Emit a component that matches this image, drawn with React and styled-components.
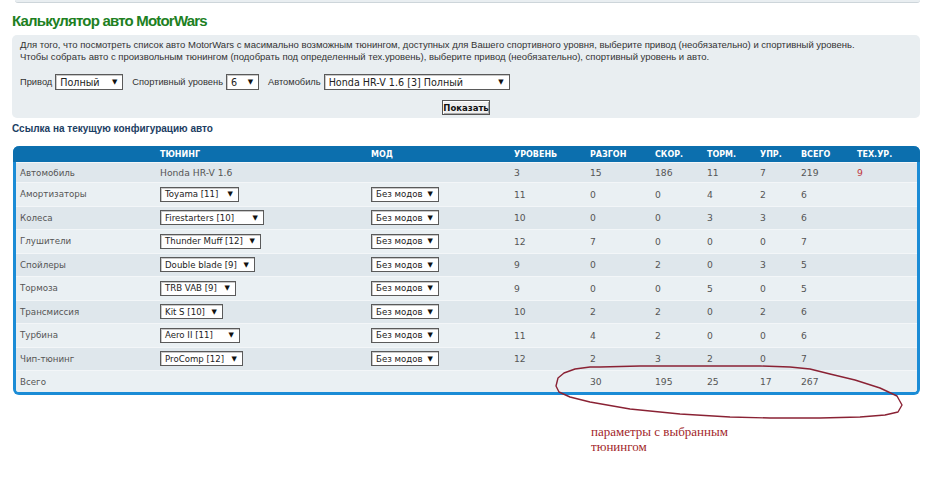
import React from "react";
import styled, { createGlobalStyle } from "styled-components";

const GlobalStyle = createGlobalStyle`
  html, body {
    margin: 0;
    padding: 0;
    background: #fff;
  }
  body {
    font-family: "DejaVu Sans", Verdana, sans-serif;
  }
`;

const rows = [
  { name: "Амортизаторы", tune: "Toyama [11]", w: 79, vals: [11, 0, 0, 4, 2, 6] },
  { name: "Колеса", tune: "Firestarters [10]", w: 104, vals: [10, 0, 0, 3, 3, 6] },
  { name: "Глушители", tune: "Thunder Muff [12]", w: 101, vals: [12, 7, 0, 0, 0, 7] },
  { name: "Спойлеры", tune: "Double blade [9]", w: 95, vals: [9, 0, 2, 0, 3, 5] },
  { name: "Тормоза", tune: "TRB VAB [9]", w: 76, vals: [9, 0, 0, 5, 0, 5] },
  { name: "Трансмиссия", tune: "Kit S [10]", w: 63, vals: [10, 2, 2, 0, 2, 6] },
  { name: "Турбина", tune: "Aero II [11]", w: 80, vals: [11, 4, 2, 0, 0, 6] },
  { name: "Чип-тюнинг", tune: "ProComp [12]", w: 83, vals: [12, 2, 3, 2, 0, 7] },
];

const heads = ["", "Тюнинг", "Мод", "Уровень", "Разгон", "Скор.", "Торм.", "Упр.", "Всего", "Тех.ур."];

// freehand loop around the totals row
const loop =
  "600,367 640,366 700,366 760,366 790,367 810,369 830,374 855,380 880,388 897,396 902,405 " +
  "898,412 885,415 860,417 820,418 770,418 730,417 680,414 630,409 590,402 570,397 559,392 " +
  "556,386 558,378 564,373 575,369 590,367 600,367";

export default function App() {
  return (
    <Page>
      <GlobalStyle />
      <PrevPanel />
      <Title>Калькулятор авто MotorWars</Title>
      <InfoPanel>
        <p>
          Для того, что посмотреть список авто MotorWars с масимально возможным тюнингом, доступных для
          Вашего спортивного уровня, выберите привод (необязательно) и спортивный уровень.
        </p>
        <p>
          Чтобы собрать авто с произвольным тюнингом (подобрать под определенный тех.уровень), выберите
          привод (необязательно), спортивный уровень и авто.
        </p>
        <Controls>
          <label>Привод</label>
          <FakeSelect $w={68} $big>
            <span>Полный</span>
            <Arrow>▼</Arrow>
          </FakeSelect>
          <label>Спортивный уровень</label>
          <FakeSelect $w={33} $big>
            <span>6</span>
            <Arrow>▼</Arrow>
          </FakeSelect>
          <label>Автомобиль</label>
          <FakeSelect $w={186} $big>
            <span>Honda HR-V 1.6 [3] Полный</span>
            <Arrow>▼</Arrow>
          </FakeSelect>
        </Controls>
        <ButtonRow>
          <ShowButton>Показать</ShowButton>
        </ButtonRow>
      </InfoPanel>

      <ConfigLink>Ссылка на текущую конфигурацию авто</ConfigLink>

      <Table>
        <HeadRow>
          {heads.map((h, i) => (
            <HeadCell key={i}>{h}</HeadCell>
          ))}
        </HeadRow>
        <Row $dark $h={20}>
          <Label>Автомобиль</Label>
          <Cell>Honda HR-V 1.6</Cell>
          <Cell />
          <Cell>3</Cell>
          <Cell>15</Cell>
          <Cell>186</Cell>
          <Cell>11</Cell>
          <Cell>7</Cell>
          <Cell>219</Cell>
          <Cell $red>9</Cell>
        </Row>
        {rows.map((r, i) => (
          <Row key={r.name} $dark={i % 2 === 1} $h={23.5}>
            <Label>{r.name}</Label>
            <Cell>
              <FakeSelect $w={r.w}>
                <span>{r.tune}</span>
                <Arrow>▼</Arrow>
              </FakeSelect>
            </Cell>
            <Cell>
              <FakeSelect $w={68}>
                <span>Без модов</span>
                <Arrow>▼</Arrow>
              </FakeSelect>
            </Cell>
            {r.vals.map((v, j) => (
              <Cell key={j}>{v}</Cell>
            ))}
            <Cell />
          </Row>
        ))}
        <Row $h={22} $last>
          <Label>Всего</Label>
          <Cell />
          <Cell />
          <Cell />
          <Cell>30</Cell>
          <Cell>195</Cell>
          <Cell>25</Cell>
          <Cell>17</Cell>
          <Cell>267</Cell>
          <Cell />
        </Row>
      </Table>

      <Note>
        параметры с выбранным
        <br />
        тюнингом
      </Note>

      <Scribble viewBox="0 0 930 490" width="930" height="490">
        <polyline
          points={loop}
          fill="none"
          stroke="#8a2234"
          strokeWidth="1.4"
          strokeLinejoin="round"
          strokeLinecap="round"
        />
      </Scribble>
    </Page>
  );
}

const Page = styled.div`
  position: relative;
  width: 930px;
  height: 490px;
  padding: 0 10px 0 12px;
  box-sizing: border-box;
  overflow: hidden;
`;

const PrevPanel = styled.div`
  height: 2px;
  margin: 0 0 0 3px;
  background: #e9eef1;
  border-bottom: 1px solid #cdd5da;
  border-radius: 0 0 4px 4px;
`;

const Title = styled.h1`
  margin: 7px 0 3px;
  font-family: "Liberation Sans", Arial, sans-serif;
  font-size: 15px;
  line-height: 22px;
  font-weight: bold;
  letter-spacing: -0.8px;
  color: #20801f;
`;

const InfoPanel = styled.div`
  background: #e9eef1;
  border-radius: 5px;
  padding: 4px 8px 5px;
  height: 83px;
  box-sizing: border-box;
  font-family: "Liberation Sans", Arial, sans-serif;
  font-size: 9.5px;
  color: #333;

  p {
    margin: 0;
    line-height: 12px;
    white-space: nowrap;
  }
`;

const Controls = styled.div`
  display: flex;
  align-items: center;
  gap: 3px;
  margin-top: 11px;
  height: 16px;

  label {
    margin-left: 6px;
    font-size: 9.3px;
    color: #333;
  }
  label:first-child {
    margin-left: 0;
  }
`;

const FakeSelect = styled.div`
  display: inline-flex;
  align-items: center;
  justify-content: space-between;
  width: ${(p) => p.$w}px;
  height: ${(p) => (p.$big ? 16 : 15)}px;
  box-sizing: border-box;
  padding: 0 5px 0 4px;
  background: #fff;
  border: 1px solid #5a5a5a;
  box-shadow: inset 1px 1px 0 #c8c8c8;
  font-family: "DejaVu Sans", Verdana, sans-serif;
  font-size: ${(p) => (p.$big ? 9.6 : 8.6)}px;
  color: #222;
  white-space: nowrap;
`;

const Arrow = styled.span`
  font-size: 7px;
  color: #111;
  margin-left: 4px;
`;

const ButtonRow = styled.div`
  display: flex;
  justify-content: center;
  margin-top: 10px;
`;

const ShowButton = styled.button`
  font-family: "DejaVu Sans", Verdana, sans-serif;
  font-size: 8.5px;
  font-weight: bold;
  color: #111;
  width: 48px;
  height: 15px;
  padding: 0;
  background: #efefef;
  border: 1px solid #555;
  box-shadow: inset 1px 1px 0 #fff, inset -1px -1px 0 #aaa;
`;

const ConfigLink = styled.div`
  margin: 5px 0 11px;
  font-family: "Liberation Sans", Arial, sans-serif;
  font-size: 10px;
  line-height: 12px;
  font-weight: bold;
  color: #1c3e63;
`;

const Table = styled.div`
  margin-left: 1px;
  border: 3px solid #1b8cd6;
  border-top: none;
  border-radius: 6px;
  background: #eaf0f3;
`;

const cols = "144px 211px 143px 76px 65px 52px 53px 41px 56px 1fr";

const HeadRow = styled.div`
  display: grid;
  grid-template-columns: ${cols};
  align-items: center;
  height: 16px;
  margin: 0 -3px;
  padding: 0 3px;
  border-radius: 6px 6px 0 0;
  background: #0c6fae;
`;

const HeadCell = styled.div`
  font-size: 8px;
  font-weight: bold;
  text-transform: uppercase;
  color: #fff;
`;

const Row = styled.div`
  display: grid;
  grid-template-columns: ${cols};
  align-items: center;
  height: ${(p) => p.$h}px;
  box-sizing: border-box;
  border-top: 1px solid #f3f6f8;
  border-radius: ${(p) => (p.$last ? "0 0 3px 3px" : "0")};
  background: ${(p) => (p.$dark ? "#dfe7ec" : "#eaf0f3")};
  color: #555;
`;

const Label = styled.div`
  padding-left: 4px;
  font-size: 8.7px;
`;

const Cell = styled.div`
  font-size: 9.2px;
  color: ${(p) => (p.$red ? "#c0363a" : "#555")};
`;

const Note = styled.div`
  margin: 29px 0 0 579px;
  font-family: "Liberation Serif", "Times New Roman", serif;
  font-size: 13px;
  line-height: 15px;
  color: #a21f2a;
`;

const Scribble = styled.svg`
  position: absolute;
  left: 0;
  top: 0;
  z-index: 2;
  overflow: visible;
  pointer-events: none;
`;
